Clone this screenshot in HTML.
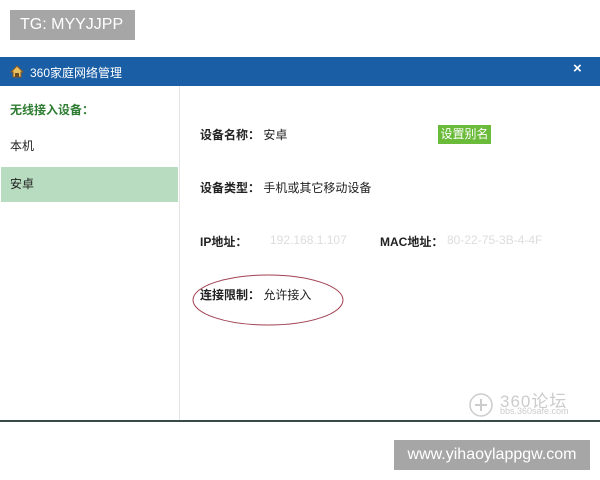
<!DOCTYPE html>
<html><head><meta charset="utf-8"><style>
*{margin:0;padding:0;box-sizing:border-box}
body{width:600px;height:480px;background:#fff;position:relative;overflow:hidden;font-family:"Liberation Sans","Noto Sans CJK SC",sans-serif;font-size:12px;color:#222}
.a{position:absolute}
.tag{background:#a6a6a6;color:#fff;font-size:16px;line-height:30px;padding:0 10px}
b{font-weight:bold}
</style></head><body>
<div class="a tag" style="left:10px;top:10px;width:125px">TG: MYYJJPP</div>
<div class="a" style="left:0;top:57px;width:600px;height:29px;background:#1a5fa6"></div>
<svg class="a" style="left:9px;top:63px" width="16" height="16"><path d="M2 9 L8 3 L14 9 L12 9 L12 14 L4 14 L4 9Z" fill="#e8c060" stroke="#8a5a20" stroke-width="1"/><path d="M6 14 V10 H10 V14" fill="#6a4a20"/></svg>
<div class="a" style="left:30px;top:64px;color:#fff;font-size:12px">360家庭网络管理</div>
<div class="a" style="left:573px;top:60px;color:#fff;font-size:15px;font-weight:bold">×</div>
<div class="a" style="left:179px;top:86px;width:1px;height:335px;background:#e4e4e4"></div>
<div class="a" style="left:10px;top:101px;color:#2e7d32;font-weight:bold">无线接入设备：</div>
<div class="a" style="left:10px;top:137px">本机</div>
<div class="a" style="left:1px;top:167px;width:177px;height:35px;background:#b8dcc0"></div>
<div class="a" style="left:10px;top:175px">安卓</div>
<div class="a" style="left:200px;top:126px"><b>设备名称：</b>&nbsp;安卓</div>
<div class="a" style="left:438px;top:125px;width:53px;height:19px;background:#6bbb3a;color:#fff;text-align:center;line-height:19px">设置别名</div>
<div class="a" style="left:200px;top:179px"><b>设备类型：</b>&nbsp;手机或其它移动设备</div>
<div class="a" style="left:200px;top:233px"><b>IP地址：</b></div>
<div class="a" style="left:270px;top:233px;color:#ddd">192.168.1.107</div>
<div class="a" style="left:380px;top:233px"><b>MAC地址：</b></div>
<div class="a" style="left:447px;top:233px;color:#ddd">80-22-75-3B-4-4F</div>
<div class="a" style="left:200px;top:286px"><b>连接限制：</b>&nbsp;允许接入</div>
<svg class="a" style="left:190px;top:272px" width="160" height="56"><ellipse cx="78" cy="28" rx="75" ry="25" fill="none" stroke="#a04050" stroke-width="1"/></svg>
<svg class="a" style="left:469px;top:393px" width="24" height="24"><circle cx="12" cy="12" r="11" fill="none" stroke="#ccc" stroke-width="1.5"/><path d="M12 6v12M6 12h12" stroke="#ccc" stroke-width="2"/></svg>
<div class="a" style="left:500px;top:387px;color:#ccc;font-size:17px;letter-spacing:1px">360论坛</div>
<div class="a" style="left:500px;top:406px;color:#ccc;font-size:9px">bbs.360safe.com</div>
<div class="a" style="left:0;top:420px;width:600px;height:2px;background:#3a4a48"></div>
<div class="a tag" style="left:394px;top:440px;width:196px;text-align:center;padding:0">www.yihaoylappgw.com</div>
</body></html>
